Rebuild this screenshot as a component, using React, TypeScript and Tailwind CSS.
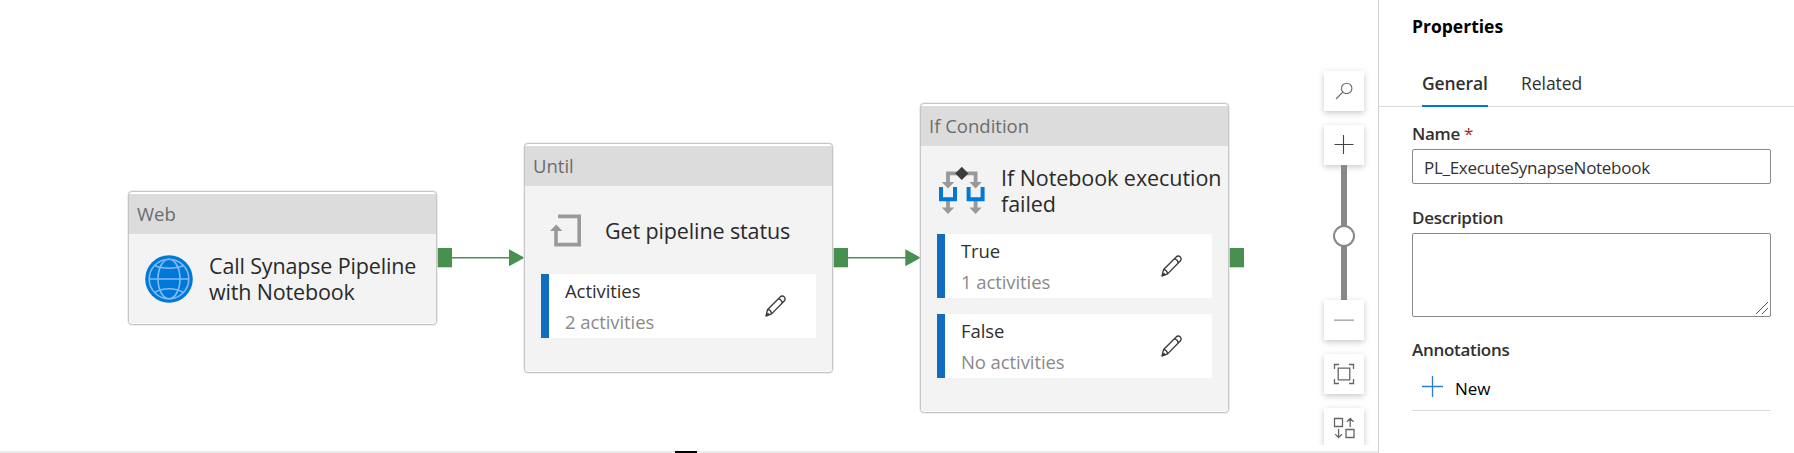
import type { ReactNode } from "react";

function GlobeIcon() {
  return (
    <svg className="size-[48px] shrink-0" viewBox="0 0 48 48" fill="none">
      <circle cx="24" cy="24" r="23.8" fill="#0078d7" />
      <g stroke="#83b9f9" strokeWidth="1.6">
        <circle cx="24" cy="24" r="19.8" />
        <ellipse cx="24" cy="24" rx="11" ry="19.8" />
        <path d="M4 24h40M9.5 10.5c8 3.6 21 3.6 29 0M9.5 37.5c8-5 21-5 29 0" />
      </g>
    </svg>
  );
}

function LoopIcon() {
  return (
    <svg className="h-[34px] w-[33px] shrink-0" viewBox="0 0 33 34" fill="none">
      <path d="M8 2.4h21.2v28.2H6V14" stroke="#999" strokeWidth="3.6" />
      <path d="M0 17 6.2 10.6 12.4 17z" fill="#999" />
    </svg>
  );
}

function BranchIcon() {
  return (
    <svg className="h-[48px] w-[46px] shrink-0" viewBox="0 0 46 48" fill="none">
      <path d="M9 16V6.3h27.6V16M9 34v8M36.6 34v8" stroke="#999" strokeWidth="3.8" />
      <path d="M2.8 15h12.4L9 21.4zM30.4 15h12.4l-6.2 6.4zM2.8 40.6h12.4L9 47zM30.4 40.6h12.4l-6.2 6.4z" fill="#999" />
      <path d="M2 20v12.2h14V20M29.6 20v12.2h14V20" stroke="#0078d7" strokeWidth="4" />
      <path d="m22.8-.2 6.6 6.6-6.6 6.6-6.6-6.6z" fill="#3c3c3c" />
    </svg>
  );
}

function PencilIcon() {
  return (
    <svg className="size-[22px]" viewBox="0 0 22 22" fill="none" stroke="#3a3a3a" strokeWidth="1.35" strokeLinejoin="round">
      <path d="M1 21l1.6-6.6L15.2 1.9c1.2-1.2 2.9-1.2 4 0s1.2 2.8 0 4L6.6 18.9zM2.6 14.4c2.2.4 3.6 2 4 4.5M13.4 3.7c2 .6 3.4 2 3.9 4.1M1 21l2.6-2.8" />
    </svg>
  );
}

function Node({ title, place, children }: { title: string; place: string; children: ReactNode }) {
  return (
    <section className={`absolute flex w-[309px] flex-col rounded-[4px] border border-[#c6c6c6] bg-white pt-[2px] pb-px shadow-[0_0_0_0.5px_#dedede] ${place}`}>
      <header className="h-10 shrink-0 bg-[#dcdcdc] pl-2 text-[18.5px] leading-10 text-[#6c6c6c]">{title}</header>
      <div className="flex flex-1 flex-col bg-[#f3f3f3]">{children}</div>
    </section>
  );
}

function Branch({ name, count }: { name: string; count: string }) {
  return (
    <div className="flex h-[64px] w-[275px] items-center border-l-[8px] border-[#106ebe] bg-white pr-[29px] pl-4 text-[18.5px]">
      <div className="flex-1 leading-[31px] tracking-[-0.08px]">
        <p className="text-[#303030]">{name}</p>
        <p className="text-[#8a8a8a]">{count}</p>
      </div>
      <PencilIcon />
    </div>
  );
}

function Connectors() {
  return (
    <svg className="absolute inset-0 h-full w-full" fill="#488f50">
      <rect x="437.5" y="248" width="14.5" height="19.3" />
      <path d="M452 257.7h58" stroke="#488f50" strokeWidth="1.5" />
      <path d="M509 249.2l15.5 8.5-15.5 8.5z" />
      <rect x="833.5" y="248" width="14.5" height="19.3" />
      <path d="M848 257.7h58" stroke="#488f50" strokeWidth="1.5" />
      <path d="M905.3 249.2l15.5 8.5-15.5 8.5z" />
      <rect x="1229.5" y="248" width="14.5" height="19.3" />
    </svg>
  );
}

function Tool({ children }: { children: ReactNode }) {
  return (
    <button className="flex h-10 w-10 shrink-0 items-center justify-center bg-white shadow-[0_2px_6px_rgba(0,0,0,0.22)]">
      <svg className="size-[22px]" viewBox="0 0 22 22" fill="none" stroke="#666" strokeWidth="1.1">
        {children}
      </svg>
    </button>
  );
}

function Toolbar() {
  return (
    <div className="absolute top-[61px] left-[1314px] flex h-[384px] w-[60px] flex-col items-center overflow-hidden pt-[10px]">
      <Tool>
        <circle cx="13.7" cy="8.4" r="5.2" />
        <path d="M9.8 12.2 3 19" />
      </Tool>
      <div className="mt-[14px] flex flex-col items-center">
        <Tool>
          <path d="M1.5 10.5h19M10.5 1v19" stroke="#444" />
        </Tool>
        <div className="relative h-[135px] w-[6px] bg-[#8a8886]">
          <span className="absolute top-[60px] -left-2 size-[22px] rounded-full border-2 border-[#8a8886] bg-white" />
        </div>
        <Tool>
          <path d="M1 11.2h20" stroke="#aaa" strokeWidth="1.5" />
        </Tool>
      </div>
      <div className="mt-[14px] flex flex-col gap-[14px]">
        <Tool>
          <path d="M5.2 5.2h11.6v11.6H5.2zM1.5 6V1.5H6M16 1.5h4.5V6M20.5 16v4.5H16M6 20.5H1.5V16" strokeWidth="1.3" />
        </Tool>
        <Tool>
          <path d="M1.5 1.5h8v8h-8zM13 12.5h8v8h-8zM17.2 10V1.5M13.8 4.9l3.4-3.4 3.4 3.4M5.6 12v8.5M2.2 17.1l3.4 3.4L9 17.1" strokeWidth="1.3" />
        </Tool>
      </div>
    </div>
  );
}

function Canvas() {
  return (
    <main className="relative w-[1378px] shrink-0 overflow-hidden border-b-2 border-[#ececec] text-[#2a2a2a]">
      <Connectors />
      <Node title="Web" place="top-[191px] left-[128px] h-[134px]">
        <div className="flex flex-1 items-center gap-[16px] pl-[16px]">
          <GlobeIcon />
          <h2 className="text-[21.5px] leading-[26px] tracking-[-0.15px] whitespace-nowrap">Call Synapse Pipeline<br />with Notebook</h2>
        </div>
      </Node>
      <Node title="Until" place="top-[143px] left-[524px] h-[230px]">
        <div className="flex h-[88px] items-center gap-[22px] pt-px pr-2 pl-[25px]">
          <LoopIcon />
          <h2 className="text-[21.5px] leading-[26px] tracking-[-0.12px]">Get pipeline status</h2>
        </div>
        <div className="pl-4">
          <Branch name="Activities" count="2 activities" />
        </div>
      </Node>
      <Node title="If Condition" place="top-[103px] left-[920px] h-[310px]">
        <div className="flex h-[88px] items-start gap-[16px] pt-[19px] pl-[18px]">
          <span className="pt-[2px]"><BranchIcon /></span>
          <h2 className="text-[21.5px] leading-[26px] tracking-[-0.06px] whitespace-nowrap">If Notebook execution<br />failed</h2>
        </div>
        <div className="flex flex-col gap-4 pl-4">
          <Branch name="True" count="1 activities" />
          <Branch name="False" count="No activities" />
        </div>
      </Node>
      <Toolbar />
    </main>
  );
}

function Properties() {
  return (
    <aside className="min-w-0 flex-1 border-l border-[#d2d2d2] text-[17px] text-[#323130]">
      <h1 className="h-[76px] pt-[13px] pl-[33px] text-[17.5px] leading-[27px] font-bold text-black">Properties</h1>
      <nav className="flex h-[31px] gap-[33px] border-b border-[#dcdcdc] pl-[43px] text-[17.5px] leading-[14px]">
        <span className="h-[31px] w-[66px] border-b-2 border-[#0078d4] font-semibold tracking-[-0.1px]">General</span>
        <span className="tracking-[-0.05px]">Related</span>
      </nav>
      <div className="flex flex-col pr-[23px] pl-[33px]">
        <label className="mt-[14px] h-[28px] leading-[26px] font-semibold tracking-[-0.3px]">Name <span className="font-normal text-[#a4262c]">*</span></label>
        <input className="h-[35px] rounded-[2px] border border-[#8a8886] px-[11px] pt-[2px] tracking-[-0.28px] outline-none" defaultValue="PL_ExecuteSynapseNotebook" />
        <label className="mt-[21px] h-[28px] leading-[26px] font-semibold tracking-[-0.28px]">Description</label>
        <div className="relative h-[84px]">
          <textarea className="block h-full w-full resize-none rounded-[2px] border border-[#8a8886] outline-none" />
          <svg className="pointer-events-none absolute right-[3px] bottom-[3px] size-[12px]" viewBox="0 0 12 12" stroke="#555" strokeWidth="1"><path d="M0 12 12 0M6 12l6-6" /></svg>
        </div>
        <h2 className="mt-[20px] leading-[26px] font-semibold tracking-[-0.3px]">Annotations</h2>
        <button className="flex h-[48px] items-center gap-[12px] border-b border-[#dcdcdc] pl-[10px] text-left text-black">
          <svg className="size-[21px]" viewBox="0 0 21 21" stroke="#2b7cd3" strokeWidth="1.3"><path d="M0 10.5h21M10.5 0v21" /></svg>
          <span className="pt-[5px]">New</span>
        </button>
      </div>
    </aside>
  );
}

export default function App() {
  return (
    <div className="relative flex h-[453px] w-[1794px] overflow-hidden bg-white font-['Open_Sans','Noto_Sans',sans-serif]">
      <Canvas />
      <Properties />
      <span className="absolute bottom-0 left-[675px] h-[2px] w-[22px] bg-black" />
    </div>
  );
}
